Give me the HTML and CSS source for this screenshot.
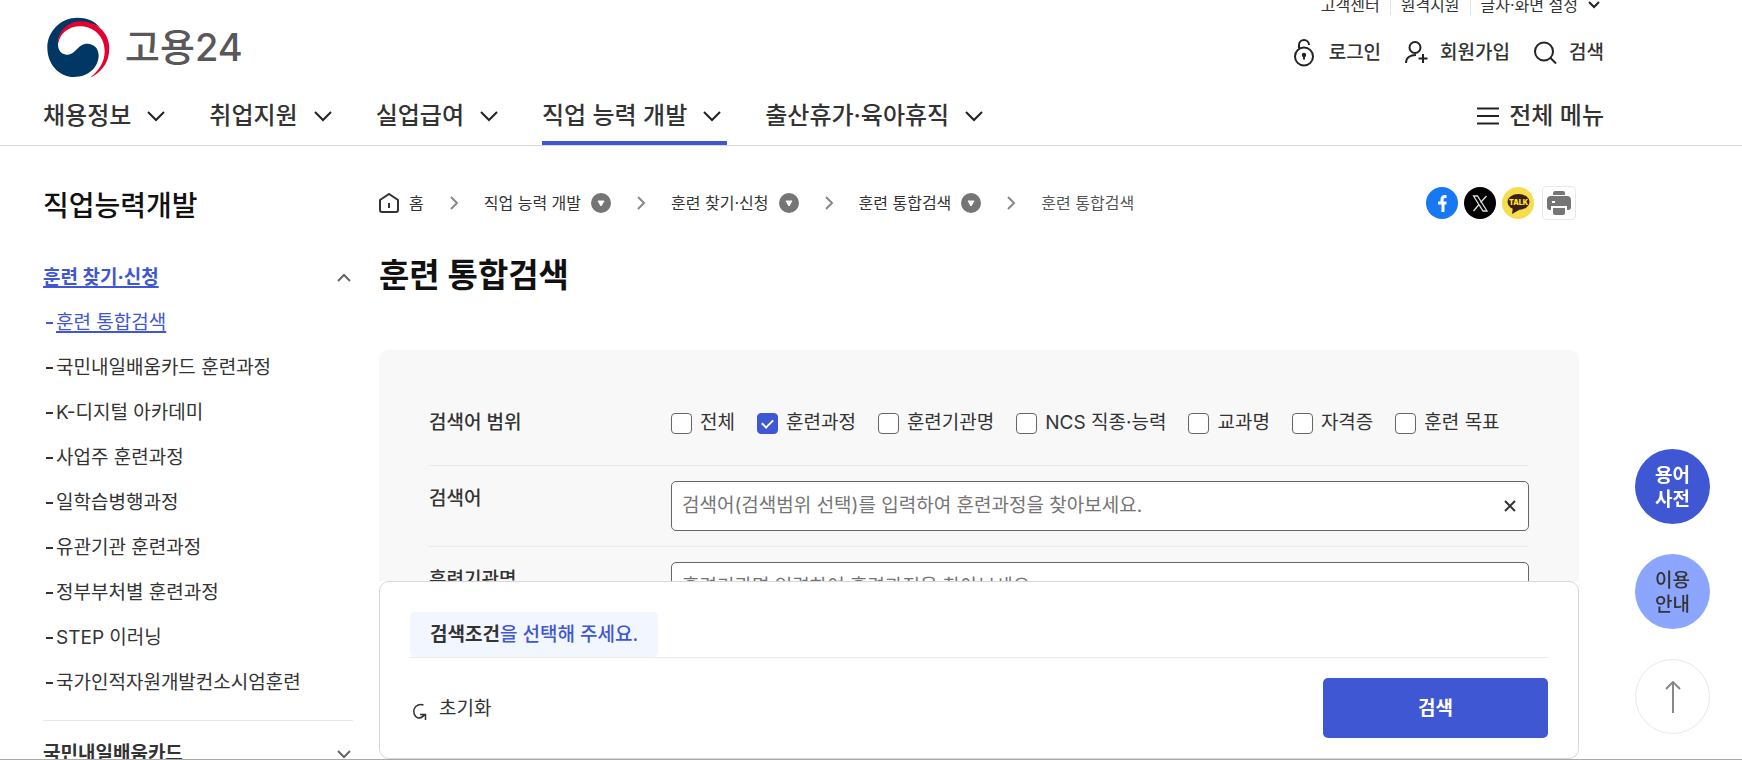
FILE: index.html
```html
<!DOCTYPE html>
<html lang="ko">
<head>
    <meta charset="UTF-8">
    <meta name="viewport" content="width=device-width, initial-scale=1.0">
    <title>훈련 통합검색 | 고용24</title>
    <link rel="stylesheet" href="styles.css">
</head>
<body>
    <header class="header">
        <div class="top-links">
            <a href="#">고객센터</a>
            <a href="#">원격지원</a>
            <button type="button">글자·화면 설정
                <svg width="14" height="14" viewBox="0 0 14 14"><path d="M2 4l5 5 5-5"/></svg>
            </button>
        </div>

        <div class="brand-row">
            <a class="logo" href="#">
                <svg width="63" height="61" viewBox="0 0 189 183">
                    <path fill="#003764" d="M160 32C140 10 118 2 92 2 42 2 1 42 1 92c0 49 35 88 80 88 44 0 74-30 74-65 0-20-14-35-34-35-30 0-33 33-62 33-17 0-26-14-26-31 0-38 30-66 67-66 24 0 44 7 60 16z"/>
                    <path fill="#e4032e" d="M33 82c-2-36 28-69 67-69 50 0 87 35 87 80 0 46-26 75-58 89 26-20 44-46 44-79 0-43-31-75-74-75-35 0-61 22-66 54z"/>
                </svg>
                <span>고용24</span>
            </a>
            <div class="user-menu">
                <a href="#">
                    <svg width="24" height="28" viewBox="0 0 24 28">
                        <circle cx="11" cy="17.500" r="9"/>
                        <path d="M6 9.500V6a5 5 0 0 1 10 0"/>
                        <circle cx="11" cy="16" r="1.200" fill="#111"/><path d="M11 16v4.500"/>
                    </svg>로그인</a>
                <a href="#">
                    <svg width="24" height="28" viewBox="0 0 24 28">
                        <circle cx="11" cy="8.500" r="5.500"/>
                        <path d="M2 24c0-5 4-8 10-8M19 15v9M14.500 19.500h9"/>
                    </svg>회원가입</a>
                <a href="#">
                    <svg width="24" height="28" viewBox="0 0 24 28">
                        <circle cx="11" cy="12.500" r="9"/><path d="M17.500 19l5.500 5.500"/>
                    </svg>검색</a>
            </div>
        </div>

        <nav class="main-nav">
            <ul>
                <li><a href="#">채용정보<svg width="30" height="20" viewBox="0 0 30 20"><path d="M7 6l8 8 8-8"/></svg></a></li>
                <li><a href="#">취업지원<svg width="30" height="20" viewBox="0 0 30 20"><path d="M7 6l8 8 8-8"/></svg></a></li>
                <li><a href="#">실업급여<svg width="30" height="20" viewBox="0 0 30 20"><path d="M7 6l8 8 8-8"/></svg></a></li>
                <li class="active"><a href="#">직업 능력 개발<svg width="30" height="20" viewBox="0 0 30 20"><path d="M7 6l8 8 8-8"/></svg></a></li>
                <li><a href="#">출산휴가·육아휴직<svg width="30" height="20" viewBox="0 0 30 20"><path d="M7 6l8 8 8-8"/></svg></a></li>
            </ul>
            <button type="button" class="all-menu">
                <svg width="22" height="18" viewBox="0 0 22 18"><path d="M0 1.500h22M0 9h22M0 16.500h22"/></svg>
                전체 메뉴
            </button>
        </nav>
    </header>

    <div class="container">
        <aside class="sidebar">
            <h2>직업능력개발</h2>
            <a class="side-title current" href="#"><span>훈련 찾기·신청</span>
                <svg width="14" height="10" viewBox="0 0 14 10"><path d="M1 8l6-6 6 6"/></svg></a>
            <ul>
                <li class="current"><a href="#">훈련 통합검색</a></li>
                <li><a href="#">국민내일배움카드 훈련과정</a></li>
                <li><a href="#">K-디지털 아카데미</a></li>
                <li><a href="#">사업주 훈련과정</a></li>
                <li><a href="#">일학습병행과정</a></li>
                <li><a href="#">유관기관 훈련과정</a></li>
                <li><a href="#">정부부처별 훈련과정</a></li>
                <li><a href="#">STEP 이러닝</a></li>
                <li><a href="#">국가인적자원개발컨소시엄훈련</a></li>
            </ul>
            <a class="side-title next" href="#"><span>국민내일배움카드</span>
                <svg width="14" height="10" viewBox="0 0 14 10"><path d="M1 2l6 6 6-6"/></svg></a>
        </aside>

        <main class="content">
            <div class="location">
                <ol class="breadcrumb">
                    <li><a href="#"><svg class="home" width="20" height="20" viewBox="0 0 20 20"><path d="M1 7l9-6 9 6v10a2 2 0 0 1-2 2H3a2 2 0 0 1-2-2zM10 10v5"/></svg>홈</a></li>
                    <li>
                        <svg class="sep" width="60" height="14" viewBox="0 0 60 14"><path d="M27 1l6 6-6 6"/></svg>
                        <button type="button">직업 능력 개발 <svg width="20" height="20" viewBox="0 0 20 20"><circle cx="10" cy="10" r="10"/><path d="M7 8h6l-3 5z"/></svg></button>
                    </li>
                    <li>
                        <svg class="sep" width="60" height="14" viewBox="0 0 60 14"><path d="M27 1l6 6-6 6"/></svg>
                        <button type="button">훈련 찾기·신청 <svg width="20" height="20" viewBox="0 0 20 20"><circle cx="10" cy="10" r="10"/><path d="M7 8h6l-3 5z"/></svg></button>
                    </li>
                    <li>
                        <svg class="sep" width="60" height="14" viewBox="0 0 60 14"><path d="M27 1l6 6-6 6"/></svg>
                        <button type="button">훈련 통합검색 <svg width="20" height="20" viewBox="0 0 20 20"><circle cx="10" cy="10" r="10"/><path d="M7 8h6l-3 5z"/></svg></button>
                    </li>
                    <li>
                        <svg class="sep" width="60" height="14" viewBox="0 0 60 14"><path d="M27 1l6 6-6 6"/></svg>
                        <span>훈련 통합검색</span>
                    </li>
                </ol>
                <div class="share">
                    <a href="#" aria-label="페이스북"><svg width="32" height="32" viewBox="0 0 32 32">
                        <circle cx="16" cy="16" r="16" fill="#1877f2"/>
                        <path d="M17 25v-8M12 16h8.500M20.500 9.500H19q-3 0-3 3.500v4" fill="none" stroke="#fff" stroke-width="3"/>
                    </svg></a>
                    <a href="#" aria-label="X"><svg width="32" height="32" viewBox="0 0 32 32">
                        <circle cx="16" cy="16" r="16"/>
                        <path d="M9.500 9h4L23 24h-4zM22.500 9l-6 6.500M15 17.500L9.500 24" fill="none" stroke="#ddd" stroke-width="1.300"/>
                    </svg></a>
                    <a href="#" aria-label="카카오톡"><svg width="32" height="32" viewBox="0 0 32 32">
                        <circle cx="16" cy="16" r="16" fill="#f5dd4b"/>
                        <ellipse cx="16.500" cy="15" rx="11" ry="8" fill="#3a1d1d"/>
                        <path d="M11 20l-1 7 7-4z" fill="#3a1d1d"/>
                        <text x="16.500" y="17.500" class="talk">TALK</text>
                    </svg></a>
                    <button type="button" class="print" aria-label="인쇄"><svg width="26" height="26" viewBox="0 0 26 26" fill="#757575">
                        <path d="M7 5V3a2 2 0 0 1 2-2h8a2 2 0 0 1 2 2v2z"/>
                        <path d="M5 6h16a4 4 0 0 1 4 4v7a3 3 0 0 1-3 3h-1v-4H5v4H4a3 3 0 0 1-3-3v-7a4 4 0 0 1 4-4z"/>
                        <path d="M7 18h12v5a2 2 0 0 1-2 2H9a2 2 0 0 1-2-2z"/>
                        <path d="M6 12h3" stroke="#fff" stroke-width="2"/>
                    </svg></button>
                </div>
            </div>

            <h1>훈련 통합검색</h1>

            <form class="search-form" id="search-form">
                <div class="form-row" role="group" aria-labelledby="range-label">
                    <span class="row-label" id="range-label">검색어 범위</span>
                    <div class="checks">
                        <label><input type="checkbox">전체</label>
                        <label><input type="checkbox" checked>훈련과정</label>
                        <label><input type="checkbox">훈련기관명</label>
                        <label><input type="checkbox">NCS 직종·능력</label>
                        <label><input type="checkbox">교과명</label>
                        <label><input type="checkbox">자격증</label>
                        <label><input type="checkbox">훈련 목표</label>
                    </div>
                </div>
                <div class="form-row">
                    <label class="row-label" for="keyword">검색어</label>
                    <div class="text-field">
                        <input type="text" id="keyword" placeholder="검색어(검색범위 선택)를 입력하여 훈련과정을 찾아보세요.">
                        <button type="button" aria-label="지우기"><svg width="12" height="12" viewBox="0 0 12 12"><path d="M1 1l10 10M11 1L1 11"/></svg></button>
                    </div>
                </div>
                <div class="form-row">
                    <label class="row-label" for="agency">훈련기관명</label>
                    <div class="text-field">
                        <input type="text" id="agency" placeholder="훈련기관명 입력하여 훈련과정을 찾아보세요.">
                    </div>
                </div>
            </form>

            <!-- 하단 고정 검색 영역 -->
            <div class="search-dock">
                <div class="dock-box">
                    <div class="dock-message">
                        <p><strong>검색조건</strong>을 선택해 주세요.</p>
                    </div>
                    <div class="dock-buttons">
                        <button type="reset" form="search-form" class="reset">
                            <svg width="18" height="18" viewBox="0 0 18 18"><path d="M13.500 3A7 7 0 1 0 8 16c3 0 5-1 6.500-3.500M10 12.500h5.500V18"/></svg>
                            초기화
                        </button>
                        <button type="submit" form="search-form" class="submit">검색</button>
                    </div>
                </div>
            </div>
        </main>
    </div>

    <div class="quick">
        <a class="quick-dict" href="#">용어<br>사전</a>
        <a class="quick-guide" href="#">이용<br>안내</a>
        <a class="quick-top" href="#" aria-label="맨 위로"><svg width="16" height="32" viewBox="0 0 16 32"><path d="M8 32V2M1 8l7-7 7 7"/></svg></a>
    </div>
</body>
</html>
```
FILE: styles.css
```css
* {
    box-sizing: border-box;
}

body {
    margin: 0;
    height: 100vh;
    display: flex;
    flex-direction: column;
    overflow: hidden;
    border-bottom: 1px solid #aaa;
    background-color: #fff;
    color: #333;
    font-family: Inter, "Noto Sans CJK KR", sans-serif;
    font-size: 19px;
    line-height: 28px;
}

h1, h2, p, ul, ol {
    margin: 0;
    padding: 0;
}

ul, ol {
    list-style: none;
}

a {
    color: inherit;
    text-decoration: none;
}

button, input {
    font: inherit;
    color: inherit;
}

button {
    padding: 0;
    border: 0;
    background: none;
    cursor: pointer;
}

svg {
    flex-shrink: 0;
}

/* header */
.header {
    padding: 0 138px 0 43px;
    border-bottom: 1px solid #d8d8d8;
}

.top-links {
    display: flex;
    justify-content: flex-end;
    align-items: flex-end;
    height: 15px;
    font-size: 16px;
    line-height: 20px;
}

.top-links a {
    padding-right: 10px;
    margin-right: 10px;
    border-right: 1px solid #e4e4e4;
}

.top-links button {
    display: flex;
    align-items: center;
    gap: 9px;
    padding-right: 3px;
}

.top-links svg, .user-menu svg, .main-nav svg {
    fill: none;
    stroke: #222;
    stroke-width: 2;
}

.brand-row {
    display: flex;
    justify-content: space-between;
    padding: 2px 0 0 4px;
}

.logo {
    display: flex;
    align-items: center;
    gap: 15px;
    height: 61px;
    color: #595757;
    font-size: 38px;
    font-weight: 500;
}

.logo span {
    padding-bottom: 2px;
}

.user-menu {
    display: flex;
    align-items: center;
    gap: 23px;
    height: 71px;
    font-weight: 500;
}

.user-menu a {
    display: flex;
    align-items: center;
    gap: 12px;
}

.main-nav {
    display: flex;
    justify-content: space-between;
    height: 57px;
    font-size: 24px;
    font-weight: 500;
}

.main-nav ul {
    display: flex;
    gap: 38px;
}

.main-nav a {
    display: flex;
    align-items: center;
    gap: 10px;
    height: 57px;
    padding-bottom: 2px;
    border-top: 4px solid transparent;
    border-bottom: 4px solid transparent;
}

.main-nav .active a {
    border-bottom-color: #3f57d3;
}

.all-menu {
    display: flex;
    align-items: center;
    gap: 10px;
    padding-bottom: 2px;
}

/* layout */
.container {
    display: flex;
    flex: 1;
    gap: 26px;
    min-height: 0;
    padding: 0 163px 0 43px;
}

.sidebar {
    width: 310px;
    flex-shrink: 0;
    padding-top: 40px;
    overflow: hidden;
}

.sidebar h2 {
    margin-bottom: 29px;
    color: #111;
    font-size: 28px;
    font-weight: 500;
    line-height: 40px;
}

.side-title {
    display: flex;
    align-items: center;
    justify-content: space-between;
    height: 45px;
    padding-right: 2px;
    font-weight: 700;
}

.side-title svg {
    fill: none;
    stroke: #666;
    stroke-width: 2;
}

.side-title.next {
    margin-top: 15px;
    border-top: 1px solid #e8e8e8;
    height: 66px;
}

.sidebar .current {
    color: #3f57d3;
}

.side-title.current span, .sidebar li.current a {
    text-decoration: underline;
    text-decoration-thickness: 2px;
    text-underline-offset: 2px;
}

.sidebar li {
    display: flex;
    align-items: center;
    gap: 3px;
    height: 45px;
    padding-left: 3px;
}

.sidebar li::before {
    content: "";
    width: 7px;
    height: 2px;
    background-color: currentColor;
}

.content {
    position: relative;
    flex: 1;
    min-width: 0;
    overflow: hidden;
}

.location {
    display: flex;
    justify-content: space-between;
    align-items: center;
    height: 36px;
    margin-top: 39px;
    font-size: 16px;
}

.breadcrumb, .breadcrumb li, .breadcrumb a, .breadcrumb button {
    display: flex;
    align-items: center;
}

.breadcrumb a, .breadcrumb button {
    gap: 10px;
}

.breadcrumb circle {
    fill: #757575;
}

.breadcrumb button path {
    fill: #fff;
    stroke: #fff;
    stroke-linejoin: round;
}

.breadcrumb .sep, .breadcrumb .home {
    fill: none;
    stroke: #888;
    stroke-width: 2;
}

.breadcrumb .home {
    stroke: #333;
}

.breadcrumb span {
    color: #555;
}

.share {
    display: flex;
    align-items: center;
    gap: 6px;
    padding-right: 3px;
}

.share a {
    display: flex;
}

.talk {
    fill: #ffe812;
    font-size: 7px;
    font-weight: 900;
    text-anchor: middle;
}

.print {
    display: flex;
    align-items: center;
    justify-content: center;
    width: 34px;
    height: 34px;
    margin-left: 2px;
    border: 1px solid #e8e8e8;
    border-radius: 4px;
}

h1 {
    margin: 29px 0 50px;
    color: #111;
    font-size: 33px;
    font-weight: 700;
    line-height: 50px;
}

/* search form */
.search-form {
    padding: 30px 50px;
    border-radius: 10px;
    background-color: #f8f8f8;
}

.form-row {
    display: grid;
    grid-template-columns: 242px 1fr;
    padding: 15px 0;
    border-bottom: 1px solid #ebebeb;
}

.form-row:first-child {
    padding: 29px 0 28px;
}

.row-label {
    padding-top: 4px;
    font-weight: 500;
}

.form-row:first-child .row-label {
    padding-top: 0;
}

.checks {
    display: flex;
    gap: 22px;
    height: 28px;
    white-space: nowrap;
}

.checks label {
    display: flex;
    align-items: center;
    gap: 8px;
}

.checks input {
    appearance: none;
    width: 21px;
    height: 21px;
    margin: 0;
    border: 1px solid #666;
    border-radius: 4px;
    background-color: #fff;
}

.checks input:checked {
    display: flex;
    justify-content: center;
    padding-top: 3px;
    border-color: #3f57d3;
    background-color: #3f57d3;
}

.checks input:checked::before {
    content: "";
    box-sizing: border-box;
    width: 7px;
    height: 11px;
    border: solid #fff;
    border-width: 0 2px 2px 0;
    transform: rotate(45deg);
}

.text-field {
    display: flex;
    align-items: center;
    height: 50px;
    padding: 0 12px 0 10px;
    border: 1px solid #666;
    border-radius: 5px;
    background-color: #fff;
}

.text-field input {
    flex: 1;
    padding: 0;
    border: 0;
    outline: none;
    background: none;
}

.text-field input::placeholder {
    color: #757575;
    opacity: 1;
}

.text-field button {
    display: flex;
}

.text-field path {
    stroke: #333;
    stroke-width: 2;
}

.search-dock {
    position: absolute;
    left: 0;
    right: 0;
    bottom: 0;
    background-color: #fff;
}

.dock-box {
    padding: 30px 30px 20px;
    border: 1px solid #d8d8d8;
    border-radius: 10px;
}

.dock-message {
    display: flex;
    border-bottom: 1px solid #ebebeb;
}

.dock-message p {
    padding: 9px 20px 8px;
    border-radius: 5px;
    background-color: #f2f7ff;
    color: #3f57d3;
    font-weight: 500;
}

.dock-message strong {
    color: #333;
    font-weight: 700;
}

.dock-buttons {
    display: flex;
    justify-content: space-between;
    margin-top: 20px;
}

.reset {
    display: flex;
    align-items: center;
    gap: 11px;
    padding-top: 2px;
}

.reset svg {
    margin-top: 3px;
    fill: none;
    stroke: #333;
    stroke-width: 1.5;
}

.submit {
    width: 225px;
    height: 60px;
    padding-top: 2px;
    border-radius: 5px;
    background-color: #3f57d3;
    color: #fff;
    font-weight: 700;
}

/* quick menu */
.quick {
    position: fixed;
    right: 32px;
    bottom: 26px;
    display: flex;
    flex-direction: column;
    gap: 30px;
}

.quick a {
    display: flex;
    align-items: center;
    justify-content: center;
    width: 75px;
    height: 75px;
    padding-top: 2px;
    border-radius: 50%;
    line-height: 24px;
    font-weight: 500;
}

.quick .quick-dict {
    background-color: #3f57d3;
    color: #fff;
    font-weight: 700;
}

.quick-guide {
    background-color: #8ca6ff;
}

.quick .quick-top {
    padding-top: 0;
    border: 1px solid #e8e8e8;
    background-color: #fff;
}

.quick-top path {
    fill: none;
    stroke: #888;
    stroke-width: 2;
}
```
